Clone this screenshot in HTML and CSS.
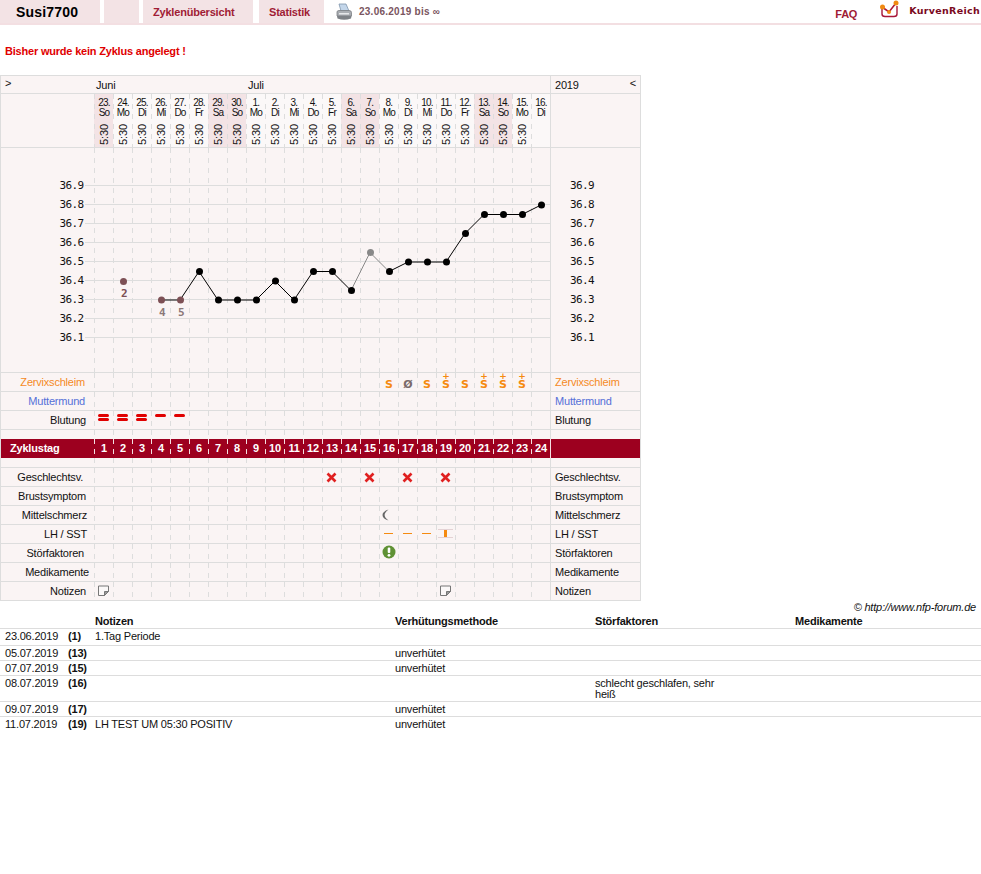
FILE: index.html
```html
<!DOCTYPE html>
<html lang="de">
<head>
    <meta charset="UTF-8">
    <title>Susi7700 - Kurve</title>
    <link rel="stylesheet" href="styles.css">
</head>
<body>
    <nav class="topbar">
        <div class="tab tab-user">Susi7700</div>
        <div class="tab tab-blank"></div>
        <a class="tab tab-zyklen">Zyklenübersicht</a>
        <a class="tab tab-statistik">Statistik</a>
        <svg class="printer" width="18" height="18" viewBox="0 0 18 18">
            <path d="M4 1 L11 1 L14 8 L6 8 Z" fill="#c3d6ea" stroke="#7f94ab" stroke-width="0.8"/>
            <path d="M2 9 Q2 7.5 4 7.5 L14 7.5 Q16.500 7.500 16.500 9.500 L16.500 13 L2 13 Z" fill="#a9adb2" stroke="#7b7f84" stroke-width="0.8"/>
            <path d="M2 13 L16.500 13 L16 15.500 Q9 18 2.500 15.500 Z" fill="#7d8186"/>
            <rect x="4" y="10" width="10" height="1.500" fill="#e6e8ea"/>
        </svg>
        <span class="range">23.06.2019 bis ∞</span>
        <a class="faq">FAQ</a>
        <svg class="logo" width="20" height="18" viewBox="0 0 20 18">
            <path d="M3 8 L3 14 Q3 16.500 6 16.500 L15 16.500 Q18 16.500 18 14 L18 6" fill="none" stroke="#a8173a" stroke-width="1.400"/>
            <path d="M3 7 L10 12 L17 3" fill="none" stroke="#a8173a" stroke-width="1.600"/>
            <circle cx="3.500" cy="7" r="2.500" fill="#f08a12"/>
            <circle cx="10" cy="12" r="2" fill="#f08a12"/>
            <circle cx="17" cy="3" r="2.500" fill="#f08a12"/>
        </svg>
        <span class="brand">KurvenReich</span>
    </nav>

    <p class="notice">Bisher wurde kein Zyklus angelegt !</p>

    <section class="curve">
        <div class="row row-months">
            <div class="side toggle">&gt;</div>
            <div class="months"><span class="month-jun">Juni</span><span>Juli</span></div>
            <div class="side side-r year">2019<span>&lt;</span></div>
        </div>

        <div class="row row-days">
            <div class="side"></div>
            <div class="track">
                <div class="day off"><span>23.<br>So</span><time>5:30</time></div>
                <div class="day"><span>24.<br>Mo</span><time>5:30</time></div>
                <div class="day"><span>25.<br>Di</span><time>5:30</time></div>
                <div class="day"><span>26.<br>Mi</span><time>5:30</time></div>
                <div class="day"><span>27.<br>Do</span><time>5:30</time></div>
                <div class="day"><span>28.<br>Fr</span><time>5:30</time></div>
                <div class="day off"><span>29.<br>Sa</span><time>5:30</time></div>
                <div class="day off"><span>30.<br>So</span><time>5:30</time></div>
                <div class="day"><span>1.<br>Mo</span><time>5:30</time></div>
                <div class="day"><span>2.<br>Di</span><time>5:30</time></div>
                <div class="day"><span>3.<br>Mi</span><time>5:30</time></div>
                <div class="day"><span>4.<br>Do</span><time>5:30</time></div>
                <div class="day"><span>5.<br>Fr</span><time>5:30</time></div>
                <div class="day off"><span>6.<br>Sa</span><time>5:30</time></div>
                <div class="day off"><span>7.<br>So</span><time>5:30</time></div>
                <div class="day"><span>8.<br>Mo</span><time>5:30</time></div>
                <div class="day"><span>9.<br>Di</span><time>5:30</time></div>
                <div class="day"><span>10.<br>Mi</span><time>5:30</time></div>
                <div class="day"><span>11.<br>Do</span><time>5:30</time></div>
                <div class="day"><span>12.<br>Fr</span><time>5:30</time></div>
                <div class="day off"><span>13.<br>Sa</span><time>5:30</time></div>
                <div class="day off"><span>14.<br>So</span><time>5:30</time></div>
                <div class="day"><span>15.<br>Mo</span><time>5:30</time></div>
                <div class="day"><span>16.<br>Di</span></div>
            </div>
            <div class="side side-r"></div>
        </div>

        <div class="row row-chart">
            <div class="side"></div>
            <div class="track"></div>
            <div class="side side-r"></div>
            <!-- drawn in page coordinates: day n sits at x = 104 + 19 * (n - 1) -->
            <svg class="chart" width="639" height="224" viewBox="1 148 639 224">
                <g class="gridlines">
                    <path d="M85 185.500H550M85 204.500H550M85 223.500H550M85 242.500H550M85 261.500H550M85 280.500H550M85 299.500H550M85 318.500H550M85 337.500H550"/>
                </g>
                <g class="temps">
                    <text x="59.500" y="189">36.9</text><text x="570" y="189">36.9</text>
                    <text x="59.500" y="208">36.8</text><text x="570" y="208">36.8</text>
                    <text x="59.500" y="227">36.7</text><text x="570" y="227">36.7</text>
                    <text x="59.500" y="246">36.6</text><text x="570" y="246">36.6</text>
                    <text x="59.500" y="265">36.5</text><text x="570" y="265">36.5</text>
                    <text x="59.500" y="284">36.4</text><text x="570" y="284">36.4</text>
                    <text x="59.500" y="303">36.3</text><text x="570" y="303">36.3</text>
                    <text x="59.500" y="322">36.2</text><text x="570" y="322">36.2</text>
                    <text x="59.500" y="341">36.1</text><text x="570" y="341">36.1</text>
                </g>
                <polyline class="line" points="161,300 180,300 199,271.500 218,300 237,300 256,300 275,281 294,300 313,271.500 332,271.500 351,290.500"/>
                <polyline class="line line-out" points="351,290.500 370,252.500 389,271.500"/>
                <polyline class="line" points="389,271.500 408,262 427,262 446,262 465,233.500 484,214.500 503,214.500 522,214.500 541,205"/>
                <g class="dots dots-bleed">
                    <circle cx="123.500" cy="281.500" r="3.500"/>
                    <circle cx="161.500" cy="300" r="3.500"/>
                    <circle cx="180.500" cy="300" r="3.500"/>
                </g>
                <g class="dots">
                    <circle cx="199.500" cy="271.500" r="3.500"/>
                    <circle cx="218.500" cy="300" r="3.500"/>
                    <circle cx="237.500" cy="300" r="3.500"/>
                    <circle cx="256.500" cy="300" r="3.500"/>
                    <circle cx="275.500" cy="281" r="3.500"/>
                    <circle cx="294.500" cy="300" r="3.500"/>
                    <circle cx="313.500" cy="271.500" r="3.500"/>
                    <circle cx="332.500" cy="271.500" r="3.500"/>
                    <circle cx="351.500" cy="290.500" r="3.500"/>
                    <circle class="dot-out" cx="370.500" cy="252.500" r="3.500"/>
                    <circle cx="389.500" cy="271.500" r="3.500"/>
                    <circle cx="408.500" cy="262" r="3.500"/>
                    <circle cx="427.500" cy="262" r="3.500"/>
                    <circle cx="446.500" cy="262" r="3.500"/>
                    <circle cx="465.500" cy="233.500" r="3.500"/>
                    <circle cx="484.500" cy="214.500" r="3.500"/>
                    <circle cx="503.500" cy="214.500" r="3.500"/>
                    <circle cx="522.500" cy="214.500" r="3.500"/>
                    <circle cx="541.500" cy="205" r="3.500"/>
                </g>
                <g class="daynums">
                    <text class="num-dark" x="124" y="297">2</text>
                    <text x="162" y="316">4</text>
                    <text x="181" y="316">5</text>
                </g>
            </svg>
        </div>

        <div class="row">
            <div class="side label nudge-9 mucus">Zervixschleim</div>
            <div class="track">
                <div class="cell s" style="grid-column: 16">S</div>
                <div class="cell s none" style="grid-column: 17">Ø</div>
                <div class="cell s" style="grid-column: 18">S</div>
                <div class="cell s plus" style="grid-column: 19">S</div>
                <div class="cell s" style="grid-column: 20">S</div>
                <div class="cell s plus" style="grid-column: 21">S</div>
                <div class="cell s plus" style="grid-column: 22">S</div>
                <div class="cell s plus" style="grid-column: 23">S</div>
            </div>
            <div class="side side-r mucus">Zervixschleim</div>
        </div>

        <div class="row">
            <div class="side label nudge-9 cervix">Muttermund</div>
            <div class="track"></div>
            <div class="side side-r cervix">Muttermund</div>
        </div>

        <div class="row">
            <div class="side label">Blutung</div>
            <div class="track">
                <div class="cell bleed strong" style="grid-column: 1"></div>
                <div class="cell bleed strong" style="grid-column: 2"></div>
                <div class="cell bleed strong" style="grid-column: 3"></div>
                <div class="cell bleed" style="grid-column: 4"></div>
                <div class="cell bleed" style="grid-column: 5"></div>
            </div>
            <div class="side side-r">Blutung</div>
        </div>

        <div class="row row-gap-top">
            <div class="side"></div>
            <div class="track"></div>
            <div class="side side-r"></div>
        </div>

        <div class="row row-cycle">
            <div class="side cycle-title">Zyklustag</div>
            <div class="track">
                <b>1</b><b>2</b><b>3</b><b>4</b><b>5</b><b>6</b><b>7</b><b>8</b>
                <b>9</b><b>10</b><b>11</b><b>12</b><b>13</b><b>14</b><b>15</b><b>16</b>
                <b>17</b><b>18</b><b>19</b><b>20</b><b>21</b><b>22</b><b>23</b><b>24</b>
            </div>
            <div class="side side-r"></div>
        </div>

        <div class="row row-gap-bottom">
            <div class="side"></div>
            <div class="track"></div>
            <div class="side side-r"></div>
        </div>

        <div class="row">
            <div class="side label nudge-11">Geschlechtsv.</div>
            <div class="track">
                <div class="cell" style="grid-column: 13"><svg width="11" height="11" viewBox="0 0 11 11"><path class="cross" d="M1.500 1.500L9.500 9.500M9.500 1.500L1.500 9.500"/></svg></div>
                <div class="cell" style="grid-column: 15"><svg width="11" height="11" viewBox="0 0 11 11"><path class="cross" d="M1.500 1.500L9.500 9.500M9.500 1.500L1.500 9.500"/></svg></div>
                <div class="cell" style="grid-column: 17"><svg width="11" height="11" viewBox="0 0 11 11"><path class="cross" d="M1.500 1.500L9.500 9.500M9.500 1.500L1.500 9.500"/></svg></div>
                <div class="cell" style="grid-column: 19"><svg width="11" height="11" viewBox="0 0 11 11"><path class="cross" d="M1.500 1.500L9.500 9.500M9.500 1.500L1.500 9.500"/></svg></div>
            </div>
            <div class="side side-r">Geschlechtsv.</div>
        </div>

        <div class="row">
            <div class="side label">Brustsymptom</div>
            <div class="track"></div>
            <div class="side side-r">Brustsymptom</div>
        </div>

        <div class="row">
            <div class="side label nudge-7">Mittelschmerz</div>
            <div class="track">
                <div class="cell" style="grid-column: 16"><svg class="moon" width="7" height="12" viewBox="0 0 7 12"><path d="M6.500 0.500 Q0.500 2.500 0.500 6 Q0.500 9.500 6.500 11.500 Q2.600 8.500 2.600 6 Q2.600 3.500 6.500 0.500 Z" fill="#666"/></svg></div>
            </div>
            <div class="side side-r">Mittelschmerz</div>
        </div>

        <div class="row">
            <div class="side label nudge-7">LH / SST</div>
            <div class="track">
                <div class="cell" style="grid-column: 16"><i class="lh"></i></div>
                <div class="cell" style="grid-column: 17"><i class="lh"></i></div>
                <div class="cell" style="grid-column: 18"><i class="lh"></i></div>
                <div class="cell" style="grid-column: 19"><i class="lh-pos"></i></div>
            </div>
            <div class="side side-r">LH / SST</div>
        </div>

        <div class="row">
            <div class="side label nudge-10">Störfaktoren</div>
            <div class="track">
                <div class="cell" style="grid-column: 16"><svg class="alert" width="14" height="14" viewBox="0 0 14 14"><circle cx="7" cy="7" r="6.500" fill="#5f9134"/><rect x="5.700" y="2.600" width="2.600" height="5.400" rx="1" fill="#fff"/><circle cx="7" cy="10.300" r="1.400" fill="#fff"/></svg></div>
            </div>
            <div class="side side-r">Störfaktoren</div>
        </div>

        <div class="row">
            <div class="side label nudge-5">Medikamente</div>
            <div class="track"></div>
            <div class="side side-r">Medikamente</div>
        </div>

        <div class="row">
            <div class="side label">Notizen</div>
            <div class="track">
                <div class="cell" style="grid-column: 1"><svg class="memo" width="11" height="11" viewBox="0 0 11 11"><path class="note" d="M0.500 1H10.500V6.500L6.500 10.500H0.500Z"/><path class="fold" d="M10.500 6.500H6.500V10.500Z"/></svg></div>
                <div class="cell" style="grid-column: 19"><svg class="memo" width="11" height="11" viewBox="0 0 11 11"><path class="note" d="M0.500 1H10.500V6.500L6.500 10.500H0.500Z"/><path class="fold" d="M10.500 6.500H6.500V10.500Z"/></svg></div>
            </div>
            <div class="side side-r">Notizen</div>
        </div>
    </section>

    <div class="credit">© http://www.nfp-forum.de</div>

    <table class="notes">
        <thead>
            <tr>
                <th class="col-date"></th>
                <th class="col-day"></th>
                <th class="col-note">Notizen</th>
                <th class="col-wide">Verhütungsmethode</th>
                <th class="col-wide">Störfaktoren</th>
                <th>Medikamente</th>
            </tr>
        </thead>
        <tbody>
            <tr class="first"><td>23.06.2019</td><td><b>(1)</b></td><td>1.Tag Periode</td><td></td><td></td><td></td></tr>
            <tr><td>05.07.2019</td><td><b>(13)</b></td><td></td><td>unverhütet</td><td></td><td></td></tr>
            <tr><td>07.07.2019</td><td><b>(15)</b></td><td></td><td>unverhütet</td><td></td><td></td></tr>
            <tr><td>08.07.2019</td><td><b>(16)</b></td><td></td><td></td><td class="wrap">schlecht geschlafen, sehr heiß</td><td></td></tr>
            <tr><td>09.07.2019</td><td><b>(17)</b></td><td></td><td>unverhütet</td><td></td><td></td></tr>
            <tr class="last"><td>11.07.2019</td><td><b>(19)</b></td><td>LH TEST UM 05:30 POSITIV</td><td>unverhütet</td><td></td><td></td></tr>
        </tbody>
    </table>
</body>
</html>
```

FILE: styles.css
```css
body {
    margin: 0;
    font-family: "Liberation Sans", Arial, sans-serif;
    font-size: 11px;
    letter-spacing: -0.2px;
    color: #111;
    background: #fff;
}

/* top navigation */
.topbar {
    display: flex;
    align-items: flex-start;
    height: 25px;
    box-sizing: border-box;
    border-bottom: 2px solid #f3dfe2;
}
.tab {
    height: 23px;
    line-height: 24px;
    box-sizing: border-box;
    background: #f3e3e5;
    font-weight: bold;
    color: #a01c35;
    padding-left: 10px;
}
.tab-user {
    width: 100px;
    padding-left: 16px;
    font-size: 14px;
    letter-spacing: 0.2px;
    color: #000;
}
.tab-blank {
    width: 35px;
    margin-left: 4px;
}
.tab-zyklen {
    width: 110px;
    margin-left: 4px;
}
.tab-statistik {
    width: 65px;
    margin-left: 6px;
}
.printer {
    margin: 3px 0 0 11px;
}
.range {
    margin-left: 6px;
    line-height: 24px;
    font-size: 10px;
    font-weight: bold;
    letter-spacing: 0.25px;
    color: #7a5560;
}
.faq {
    margin-left: auto;
    line-height: 29px;
    font-weight: bold;
    color: #a01c35;
}
.logo {
    margin: 0 0 0 22px;
}
.brand {
    margin: 0 1px 0 10px;
    line-height: 21px;
    font-family: "DejaVu Sans", sans-serif;
    font-size: 9.5px;
    font-weight: bold;
    letter-spacing: 0.3px;
    color: #7a0a1e;
}

.notice {
    margin: 20px 5px 17px;
    line-height: 13px;
    font-weight: bold;
    color: #e00000;
}

/* curve table */
.curve {
    width: 641px;
    box-sizing: border-box;
    background: #faf4f4;
    border: 1px solid #ddd;
    border-top: none;
}
.row {
    display: grid;
    grid-template-columns: 93px 456px 90px;
    height: 19px;
    box-sizing: border-box;
    border-top: 1px solid #ddd;
}
.row-months {
    height: 18px;
}
.row-days {
    height: 54px;
}
.row-chart {
    position: relative;
    height: 225px;
}
.row-gap-top {
    height: 10px;
}
.row-gap-bottom {
    height: 9px;
    border-top: none;
}
.side {
    line-height: 18px;
}
.side-r {
    border-left: 1px solid #ddd;
    padding-left: 4px;
}
.label {
    text-align: right;
    padding-right: 8px;
}
.nudge-5 {
    padding-right: 5px;
}
.nudge-7 {
    padding-right: 7px;
}
.nudge-9 {
    padding-right: 9px;
}
.nudge-10 {
    padding-right: 10px;
}
.nudge-11 {
    padding-right: 11px;
}
.mucus {
    color: #f58a1f;
}
.cervix {
    color: #5570d8;
}
.toggle {
    padding-left: 4px;
    line-height: 15px;
}
.months {
    display: flex;
    padding-left: 2px;
    line-height: 18px;
}
.month-jun {
    width: 152px;
}
.year {
    display: flex;
    justify-content: space-between;
    padding-right: 4px;
}
.year span {
    line-height: 15px;
}

/* vertical dashes: 1px wide, 5 on 5 off, one every day column */
.track,
.day {
    background-image: conic-gradient(at 1px 5px, transparent 75%, #ddd 0);
    background-size: 19px 10px;
}
.track {
    display: grid;
    grid-template-columns: repeat(24, 19px);
}
.day {
    display: flex;
    flex-direction: column;
    align-items: center;
    justify-content: space-between;
    padding: 4px 0 2px 1px;
    font-size: 10px;
    line-height: 10px;
    letter-spacing: -0.8px;
    text-align: center;
    background-color: #fbf8f8;
}
.day.off {
    background-color: #f3e3e5;
}
.day time {
    writing-mode: vertical-rl;
    transform: rotate(180deg);
    font-size: 11px;
    letter-spacing: -0.1px;
    line-height: 12px;
}

/* temperature chart */
.chart {
    position: absolute;
    top: 0;
    left: 0;
}
.gridlines path {
    stroke: #ddd;
    fill: none;
}
.temps text,
.daynums text {
    font-family: "DejaVu Sans Mono", monospace;
    font-size: 11px;
    letter-spacing: -0.6px;
    fill: #111;
}
.line {
    fill: none;
    stroke: #000;
    stroke-width: 1;
}
.line-out {
    stroke: #888;
}
.dots circle {
    fill: #000;
}
.dots-bleed circle {
    fill: #7d5055;
}
.dots .dot-out {
    fill: #888;
}
.daynums text {
    fill: #8a7878;
    font-weight: bold;
    text-anchor: middle;
}
.daynums .num-dark {
    fill: #7d5055;
}

/* marks inside the day columns */
.cell {
    grid-row: 1;
    display: flex;
    align-items: center;
    justify-content: center;
}
.s {
    position: relative;
    padding: 4px 0 0 1px;
    font-family: "DejaVu Sans", sans-serif;
    font-size: 11px;
    font-weight: bold;
    letter-spacing: 0;
    color: #f58a10;
}
.s.none {
    color: #7a6a6a;
}
.plus::before {
    content: "+";
    position: absolute;
    top: -2px;
    left: 1px;
    right: 0;
    text-align: center;
    font-size: 9px;
    line-height: 10px;
}
.bleed {
    align-items: flex-start;
}
.bleed::before {
    content: "";
    width: 11px;
    height: 3px;
    margin-top: 3px;
    border-radius: 2px;
    background: #e00000;
}
.bleed.strong::before {
    box-shadow: 0 4px 0 #e00000;
}
.cross {
    stroke: #e02020;
    stroke-width: 2.6;
    fill: none;
}
.moon {
    margin-right: 7px;
}
.lh {
    width: 9px;
    height: 1px;
    margin-bottom: 2px;
    background: #f58a10;
}
.lh-pos {
    position: relative;
    display: block;
    width: 15px;
    height: 9px;
    margin-bottom: 2px;
    border: solid #e4d2d4;
    border-width: 1px 0;
    box-sizing: border-box;
}
.lh-pos::after {
    content: "";
    position: absolute;
    top: 0;
    left: 6px;
    width: 3px;
    height: 7px;
    background: #f58a10;
}
.alert {
    margin-bottom: 2px;
}
.memo {
    margin-bottom: 2px;
}
.note {
    fill: #fbf8f8;
    stroke: #777;
    stroke-width: 1;
}
.fold {
    fill: #999;
    stroke: #777;
    stroke-width: 1;
}

/* Zyklustag band */
.row-cycle {
    border-top: none;
    background: #9d001f;
    color: #fff;
    font-weight: bold;
}
.row-cycle .track {
    background-image: conic-gradient(at 1px 5px, transparent 75%, #f4dfe2 0);
}
.row-cycle b {
    text-align: center;
    line-height: 19px;
    padding-left: 1px;
}
.cycle-title {
    padding-left: 9px;
    line-height: 19px;
}
.row-cycle .side-r {
    border-left-color: #f4dfe2;
}

.credit {
    height: 13px;
    line-height: 13px;
    padding-right: 5px;
    text-align: right;
    font-style: italic;
}

/* notes list */
.notes {
    width: 981px;
    table-layout: fixed;
    border-collapse: collapse;
}
.notes th,
.notes td {
    padding: 2px 5px 1px;
    line-height: 11px;
    text-align: left;
    vertical-align: top;
    border-bottom: 1px solid #ddd;
}
.notes .col-date {
    width: 53px;
}
.notes .col-day {
    width: 17px;
}
.notes .col-note {
    width: 290px;
}
.notes .col-wide {
    width: 190px;
}
.notes .first td {
    padding-bottom: 3px;
}
.notes .last td {
    border-bottom: none;
}
.notes .wrap {
    padding-right: 60px;
}
```
